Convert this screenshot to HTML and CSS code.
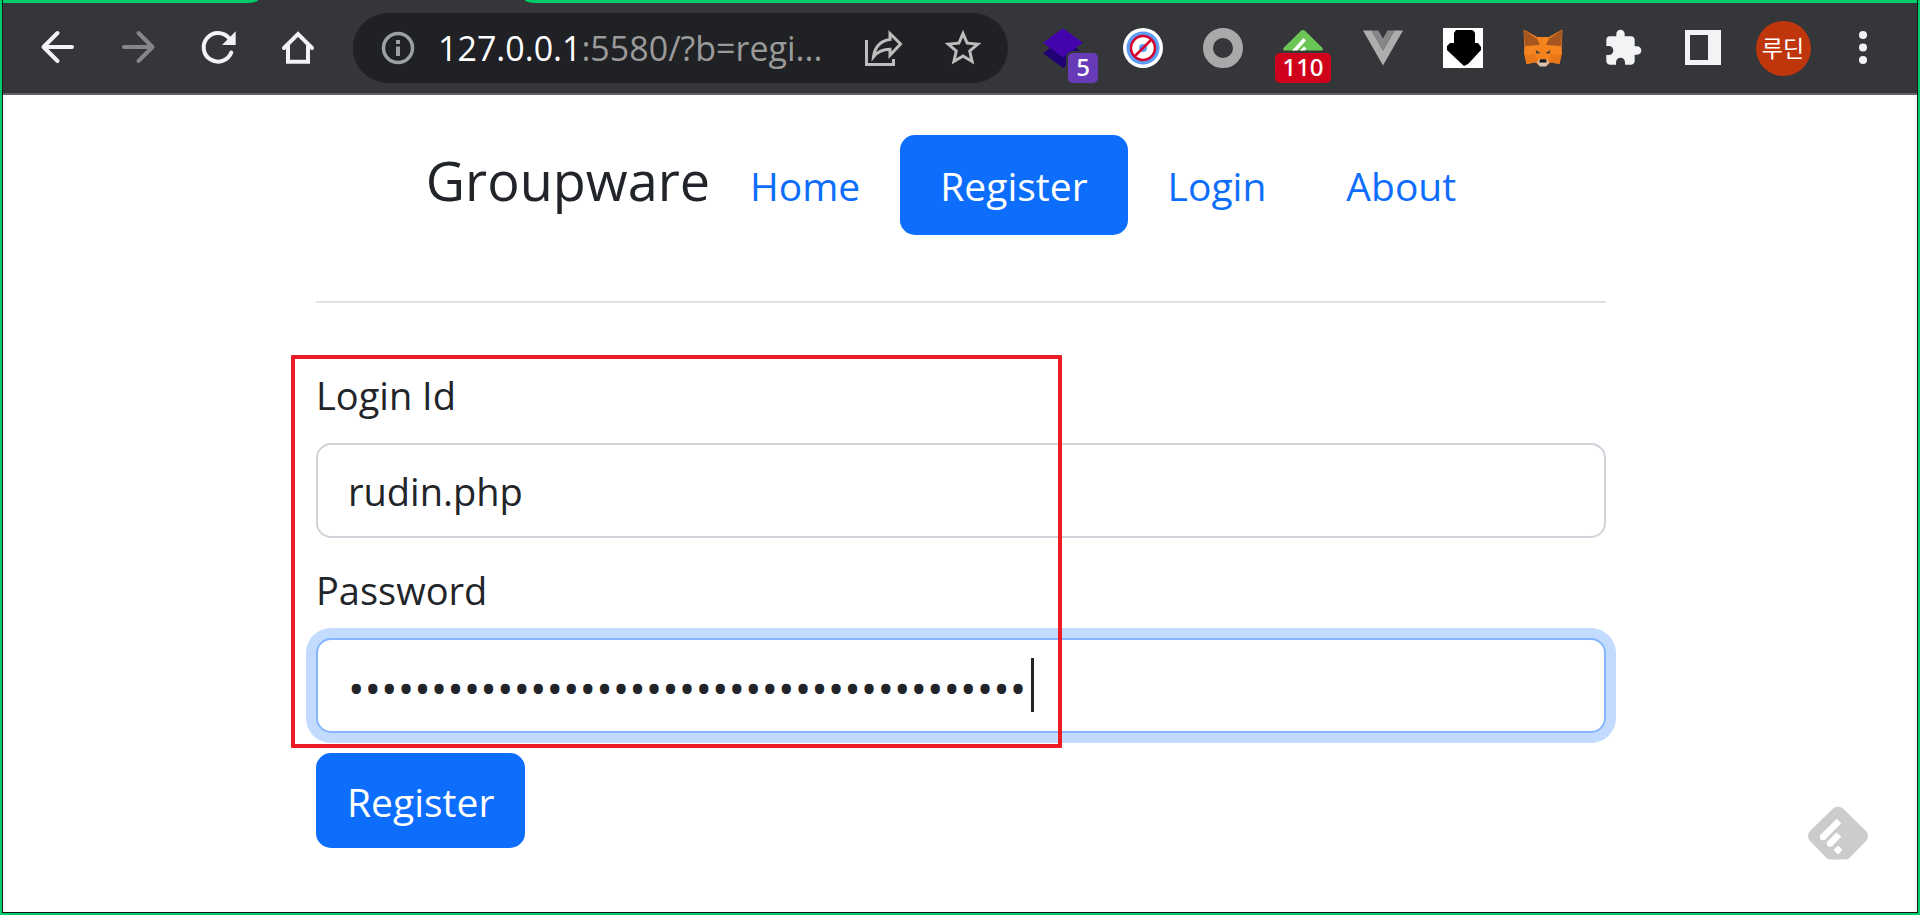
FILE: index.html
```
<!DOCTYPE html>
<html lang="en">
<head>
<meta charset="utf-8">
<title>Groupware</title>
<link rel="stylesheet" href="styles.css">
</head>
<body>
<div class="window">
  <header class="browser">
    <div class="tab-strip"><span class="strip strip-start"></span><span class="strip strip-end"></span></div>
    <div class="toolbar">
      <button class="slot" aria-label="Back"><svg class="icon" viewBox="0 0 40 40"><path d="M34 19H6M19.500 5L5.500 19l14 14" fill="none" stroke="#f1f3f4" stroke-width="4" stroke-linecap="round" stroke-linejoin="round"/></svg></button>
      <button class="slot" aria-label="Forward"><svg class="icon" viewBox="0 0 40 40"><path d="M6 19h28M20.500 5l14 14-14 14" fill="none" stroke="#85868a" stroke-width="4" stroke-linecap="round" stroke-linejoin="round"/></svg></button>
      <button class="slot" aria-label="Reload"><svg class="icon" viewBox="0 0 40 40"><path d="M31 10.200A14.300 14.300 0 1 0 33.300 24.500" fill="none" stroke="#f1f3f4" stroke-width="4" stroke-linecap="round"/><path d="M37.700 3.300V17H24z" fill="#f1f3f4"/></svg></button>
      <button class="slot" aria-label="Home"><svg class="icon" viewBox="0 0 40 40"><path d="M6 20L20 6l14 14M10 18v15.700h20V18" fill="none" stroke="#f1f3f4" stroke-width="4" stroke-linecap="round"/></svg></button>
      <div class="omnibox">
        <svg class="icon" viewBox="0 0 40 40"><circle cx="20" cy="20" r="14.500" fill="none" stroke="#9aa0a6" stroke-width="3.500"/><path d="M18 12h4v4h-4zM18 18.500h4V28h-4z" fill="#9aa0a6"/></svg>
        <div class="url">127.0.0.1<span class="url-rest">:5580/?b=regi...</span></div>
        <button class="omni-button" aria-label="Share"><svg class="icon" viewBox="0 0 40 40"><path d="M3.500 12v24.500h27V31" fill="none" stroke="#bdbdbe" stroke-width="3"/><path d="M27 5.500L37.500 16 27 27.200v-6c-7 0-12.500 2.500-16.500 7.500C11.500 20 17 12.500 27 11.500z" fill="none" stroke="#bdbdbe" stroke-width="3"/></svg></button>
        <button class="omni-button" aria-label="Bookmark"><svg class="icon star" viewBox="0 0 24 24"><path fill="#bdbdbe" d="M22 9.240l-7.190-.62L12 2 9.190 8.630 2 9.240l5.460 4.730L5.820 21 12 17.270 18.180 21l-1.630-7.030L22 9.240zM12 15.400l-3.760 2.270 1-4.280-3.320-2.880 4.380-.38L12 6.100l1.710 4.040 4.380.38-3.320 2.880 1 4.280L12 15.400z"/></svg></button>
      </div>
      <button class="slot" aria-label="Layers extension, 5"><svg class="icon" viewBox="0 0 40 40"><path d="M0 25L20 11l20 14-20 15z" fill="#210074"/><path d="M0 14.800L20 .3l20 14.500L20 29.500z" fill="#4303ad"/></svg><span class="badge badge-purple">5</span></button>
      <button class="slot" aria-label="Blocker extension"><svg class="icon" viewBox="0 0 40 40"><circle cx="20" cy="20" r="20" fill="#fff"/><circle cx="20" cy="20" r="16.500" fill="#5b9cf5"/><circle cx="20" cy="20" r="12" fill="#fff"/><circle cx="20" cy="20" r="4" fill="#5b9cf5"/><circle cx="20" cy="20" r="12" fill="none" stroke="#d5002b" stroke-width="2.500"/><path d="M28.500 11.500l-17 17" stroke="#d5002b" stroke-width="2.500"/></svg></button>
      <button class="slot" aria-label="Ring extension"><svg class="icon" viewBox="0 0 40 40"><circle cx="20" cy="20" r="15" fill="none" stroke="#a9a9a9" stroke-width="10"/></svg></button>
      <button class="slot" aria-label="Feed extension, 110"><svg class="icon" viewBox="0 0 40 40"><path d="M17.500 3.200q2.500-2.400 5 0L39.500 20q1 2.500-1 2.500h-37q-2 0-1-2.500z" fill="#6cc655"/><path d="M9 22.500L20.500 10l2.500 2.500-9 10zM17 22.500l4-4 2.500 2-2 2z" fill="#fff"/></svg><span class="badge badge-red">110</span></button>
      <button class="slot" aria-label="Vue extension"><svg class="icon" viewBox="0 0 40 40"><path d="M0 2.500h8.500L20 22.500l11.500-20H40L20 37.500z" fill="#adadad"/><path d="M8.500 2.500h7l4.500 8 4.500-8h7L20 22.500z" fill="#858688"/></svg></button>
      <button class="slot" aria-label="Download extension"><svg class="icon" viewBox="0 0 40 40"><path d="M0 0h40v40H0z" fill="#fff"/><path d="M13 2h16q3 1 3 4v9h3l3 4v3L27 34l-2 2-4 2L6 24l-2-2v-4l3-3h4V5z" fill="#000"/></svg></button>
      <button class="slot" aria-label="Fox wallet extension"><svg class="icon" viewBox="0 0 40 40">
        <path d="M.5 1.500L14 9h12L39.500 1.500l-.8 17L39 25l-2.500 11-9-1.800-4 3.800h-7l-4-3.800-9 1.800L1 25l.3-6.500z" fill="#f5841f"/>
        <path d="M.5 1.500L13 8.500l4 8.500L2 18zM39.500 1.500L27 8.500l-4 8.500 15 1z" fill="#a6561f"/><path d="M.5 1.500L14 9l-1 1.500zM39.500 1.500L26 9l1 1.500z" fill="#e27a22"/>
        <path d="M2 27l10-1 3 8-11.500 2zM38 27l-10-1-3 8 11.500 2z" fill="#e87718"/>
        <path d="M12.500 22l5 3-4 .8zM27.500 22l-5 3 4 .8z" fill="#3c3b45"/>
        <path d="M14 34l3-3h6l3 3-3 4.500h-6z" fill="#d8c2b2"/><path d="M17 31.200h6l.7 3.300h-7.400z" fill="#161616"/></svg></button>
      <button class="slot" aria-label="Extensions"><svg class="icon" viewBox="0 0 24 24"><path fill="#f1f3f4" d="M20.500 11H19V7c0-1.100-.9-2-2-2h-4V3.500C13 2.120 11.880 1 10.500 1S8 2.120 8 3.500V5H4c-1.100 0-1.990.9-1.990 2v3.800H3.500c1.490 0 2.700 1.210 2.700 2.700s-1.210 2.700-2.700 2.700H2V20c0 1.100.9 2 2 2h3.800v-1.500c0-1.490 1.210-2.700 2.700-2.700 1.490 0 2.700 1.210 2.700 2.700V22H17c1.100 0 2-.9 2-2v-4h1.500c1.380 0 2.500-1.120 2.500-2.500S21.880 11 20.500 11z"/></svg></button>
      <button class="slot" aria-label="Side panel"><svg class="icon" viewBox="0 0 40 40"><path d="M2 2h36v35H2zM7 7v25h18V7z" fill="#f1f3f4" fill-rule="evenodd"/></svg></button>
      <button class="slot" aria-label="Profile"><span class="avatar" lang="ko">루딘</span></button>
      <button class="slot" aria-label="Menu"><svg class="icon" viewBox="0 0 40 40"><g fill="#f1f3f4"><circle cx="20" cy="7" r="4"/><circle cx="20" cy="19.500" r="4"/><circle cx="20" cy="32" r="4"/></g></svg></button>
    </div>
  </header>
  <main class="container">
    <nav class="nav">
      <h1 class="brand">Groupware</h1>
      <a class="nav-link" href="#">Home</a>
      <a class="nav-link active" href="#">Register</a>
      <a class="nav-link" href="#">Login</a>
      <a class="nav-link" href="#">About</a>
    </nav>
    <hr class="divider">
    <form class="form">
      <div class="fields">
        <div class="field">
          <label class="label" for="login">Login Id</label>
          <input class="control" id="login" type="text" value="rudin.php">
        </div>
        <div class="field">
          <label class="label" for="password">Password</label>
          <div class="control-wrap">
            <input class="control password" id="password" type="password" value="abcdefghijklmnopqrstuvwxyzabcdefghijklmno">
            <span class="caret"></span>
          </div>
        </div>
        <span class="highlight"></span>
      </div>
      <button class="submit" type="button">Register</button>
    </form>
  </main>
  <svg class="feed-button" viewBox="0 0 60 54"><path d="M24.500 3q5.500-5 11 0L58 25q4 5 0 10L42.500 51q-2 2.500-5 2.500h-15q-3 0-5-2.500L2 35q-4-5 0-10z" fill="#ccc"/><path d="M15 31L31 15M22 37.500l9-9" stroke="#fff" stroke-width="6.500"/><circle cx="15" cy="31" r="3.200" fill="#fff"/><circle cx="22" cy="37.500" r="3.200" fill="#fff"/><path d="M30 40l4 4-4 4-4-4z" fill="#fff" stroke="#fff"/></svg>
</div>
</body>
</html>
```
FILE: styles.css
```
* { box-sizing: border-box; }

body {
  margin: 0;
  font-family: "Open Sans", "Noto Sans", "Noto Sans CJK KR", sans-serif;
  font-size: 38px;
  line-height: 60px;
  color: #212529;
  background: #fff;
}

button, input { font: inherit; color: inherit; }

.window {
  position: relative;
  min-height: 100vh;
  border: solid #00cc6a;
  border-width: 0 2px 2px;
  box-shadow: inset 1px -1px #14181a, inset -1px 0 #14181a;
}

/* browser chrome */
.browser {
  margin: 0 1px;
  background: #35363a;
  border-bottom: 2px solid #606166;
}

.tab-strip {
  display: flex;
  justify-content: space-between;
  height: 3px;
}

.strip { background: #00cc6a; }
.strip-start { width: 255px; border-bottom-right-radius: 10px 3px; }
.strip-end { width: calc(100% - 522px); border-bottom-left-radius: 10px 3px; }

.toolbar {
  display: flex;
  height: 90px;
  align-items: center;
  padding: 0 14px 0 15px;
}

.slot {
  position: relative;
  flex: none;
  display: flex;
  align-items: center;
  justify-content: center;
  width: 80px;
  height: 90px;
  padding: 0;
  border: 0;
  background: none;
}

.icon { display: block; flex: none; width: 40px; height: 40px; }
.star { width: 44px; height: 44px; }

.omnibox {
  flex: 1;
  min-width: 0;
  display: flex;
  align-items: center;
  height: 70px;
  margin: 0 15px;
  padding: 0 25px;
  border-radius: 35px;
  background: #202124;
}

.url {
  flex: 1;
  min-width: 0;
  padding-left: 20px;
  overflow: hidden;
  white-space: nowrap;
  font-size: 34px;
  color: #fff;
}

.url-rest { color: #9a9a9b; }

.omni-button {
  display: flex;
  align-items: center;
  justify-content: center;
  width: 40px;
  margin-left: 40px;
  padding: 0;
  border: 0;
  background: none;
}

.badge {
  position: absolute;
  top: 50px;
  height: 30px;
  border-radius: 5px;
  box-shadow: 0 0 0 2px #35363a;
  font-family: "Noto Sans", sans-serif;
  font-size: 24px;
  font-weight: 500;
  line-height: 28px;
  color: #fff;
}

.badge-purple { right: 5px; width: 30px; background: #673ab7; }
.badge-red { right: 12px; width: 56px; background: #d0021b; }

.avatar {
  width: 55px;
  height: 55px;
  border-radius: 50%;
  background: #bf360c;
  font-family: "Noto Sans CJK KR", sans-serif;
  font-size: 23px;
  line-height: 53px;
  color: #fff;
}

/* page */
.container {
  max-width: 1350px;
  margin: 0 auto;
  padding: 40px 29px 64px 31px;
}

.nav {
  display: flex;
  justify-content: center;
  align-items: center;
}

.brand {
  margin: 0;
  padding-bottom: 10px;
  font-size: 54px;
  font-weight: 400;
  line-height: 60px;
}

.nav-link {
  padding: 21px 40px 19px;
  border-radius: 15px;
  font-size: 39px;
  color: #0d6efd;
  text-decoration: none;
}

.nav-link.active { background: #0d6efd; color: #fff; }

.divider {
  margin: 66px 0 60px;
  border: 0;
  border-top: 2px solid #dee2e6;
}

.fields {
  position: relative;
  display: grid;
  gap: 20px;
}

.label {
  display: block;
  padding: 2px 0 18px;
}

.control {
  display: block;
  width: 100%;
  height: 95px;
  padding: 0 30px;
  border: 2px solid #ced4da;
  border-radius: 15px;
  background: #fff;
  outline: 0;
}

.control-wrap { position: relative; }

.password {
  padding-top: 4px;
  border-color: #86b7fe;
  box-shadow: 0 0 0 10px #c2dbff;
  font-size: 44px;
}

.caret {
  position: absolute;
  top: 20px;
  left: 715px;
  width: 3px;
  height: 54px;
  background: #212529;
}

.highlight {
  position: absolute;
  top: -8px;
  bottom: -15px;
  left: -25px;
  width: 771px;
  border: 4px solid #ed1c24;
  border-radius: 1px;
  pointer-events: none;
}

.submit {
  display: block;
  height: 95px;
  margin-top: 20px;
  padding: 2px 31px 0;
  border: 0;
  border-radius: 15px;
  background: #0d6efd;
  font-size: 39px;
  color: #fff;
}

.feed-button {
  position: absolute;
  right: 50px;
  bottom: 53px;
  width: 60px;
  height: 54px;
}
```
